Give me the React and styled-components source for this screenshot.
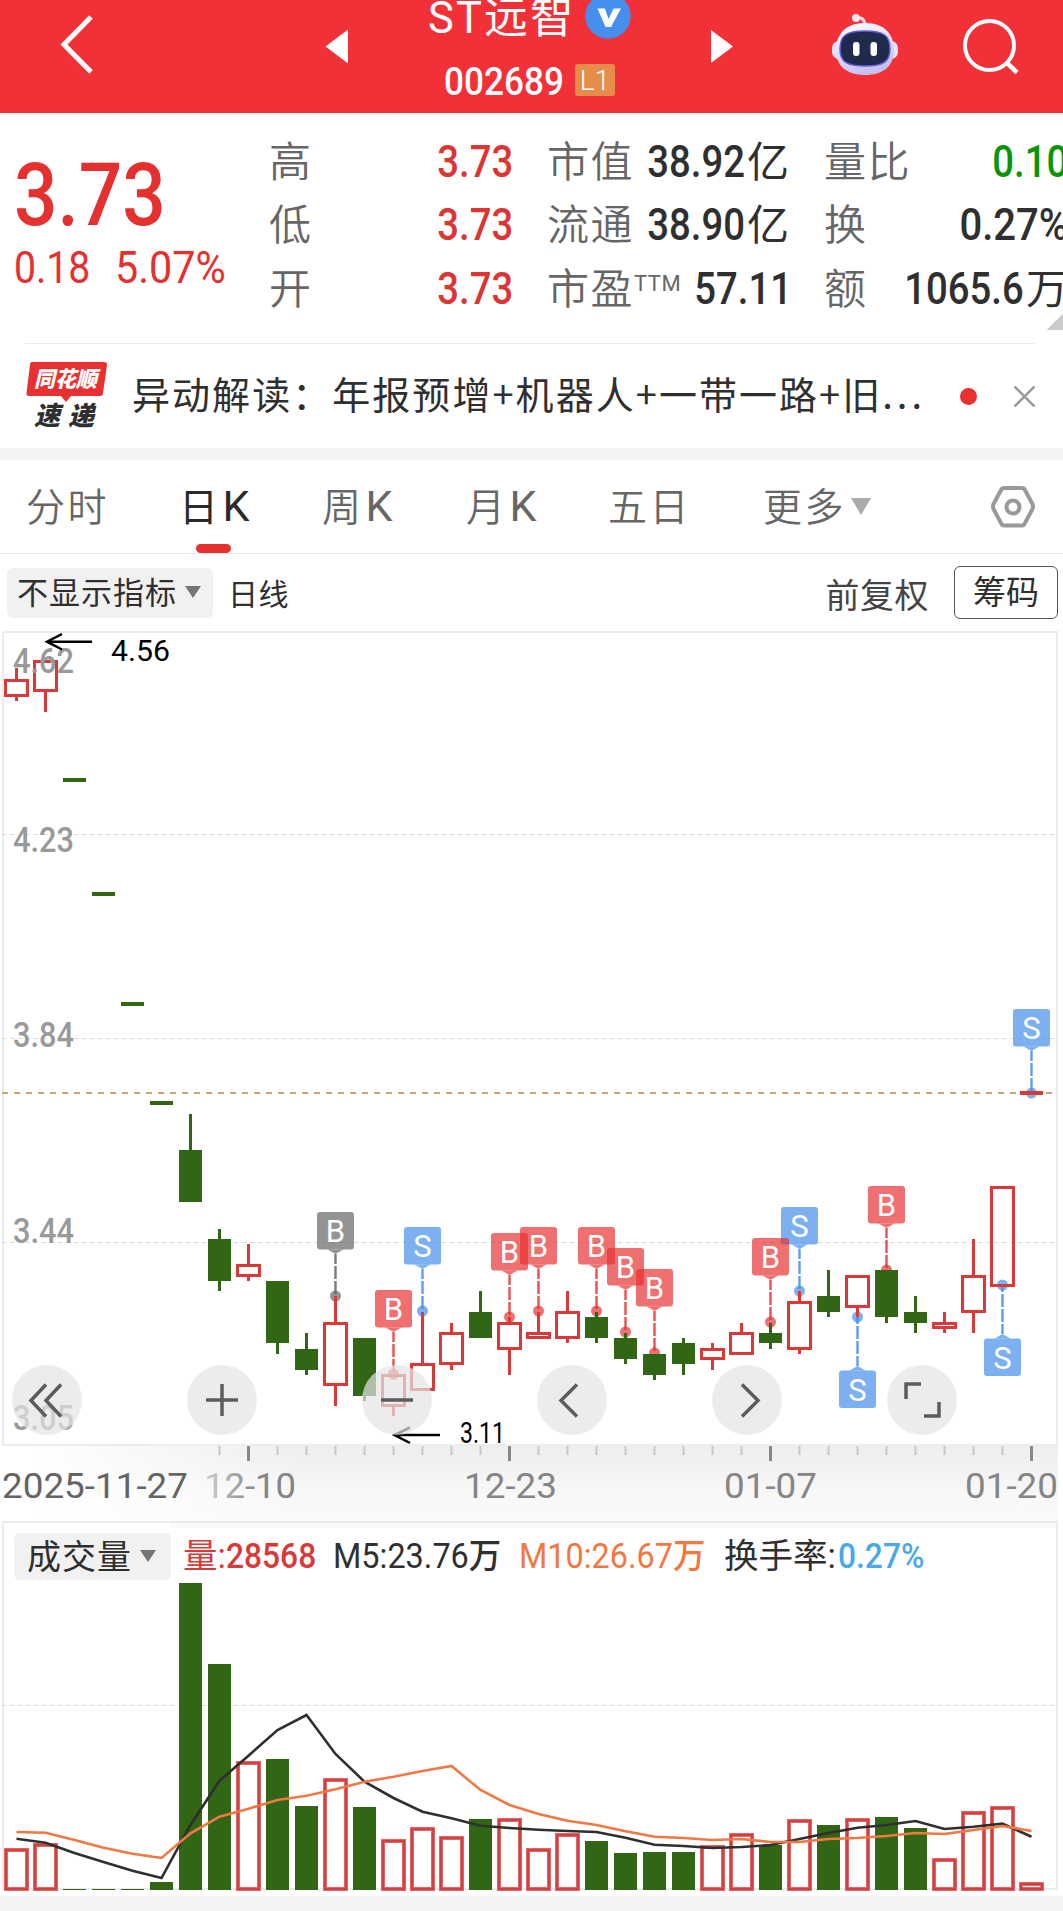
import React from 'react';
import styled, { createGlobalStyle } from 'styled-components';

const GlobalStyle = createGlobalStyle`
    * {
        box-sizing: border-box;
    }

    body {
        margin: 0;
        background: #fff;
        font-family: Roboto, 'Noto Sans CJK SC', sans-serif;
        overflow-x: hidden;
    }

    svg {
        display: block;
        flex: none;
    }
`;

const Page = styled.div`
    width: 1063px;
    height: 1911px;
    overflow: hidden;
    color: #2f2f2f;
    white-space: nowrap;
`;

// narrow figures, squeezed towards the side they are aligned to
const Digits = styled.span`
    display: inline-block;
    font-weight: ${({ $weight }) => $weight || 500};
    transform: scaleX(${({ $squeeze }) => $squeeze || 0.88});
    transform-origin: ${({ $from }) => $from || 'left'} center;
`;

/* ---------- header ---------- */

const Header = styled.header`
    display: flex;
    height: 113px;
    background: #f23038;
    color: #fff;
`;

const HeaderIcons = styled.svg`
    width: ${({ $width }) => $width}px;
    height: 113px;
`;

const Stock = styled.div`
    width: 316px;
    padding-left: 60px;
`;

const StockName = styled.div`
    display: flex;
    height: 39px;
    font-size: 43.5px;
    letter-spacing: 2.2px;
    line-height: 37px;
`;

const NameText = styled.div`
    width: 157px;
`;

const StockCode = styled.div`
    display: flex;
    align-items: center;
    height: 54px;
    margin-top: 14px;
    padding-left: 16px;
    font-size: 38px;
`;

const CodeText = styled.div`
    width: 131px;
    padding-top: 4px;
`;

const Level = styled.div`
    width: 40px;
    height: 32px;
    border-radius: 3px;
    background: #e58e4b;
    font-size: 28px;
    font-weight: 300;
    line-height: 33px;
    text-align: center;
`;

/* ---------- quote ---------- */

const Quote = styled.section`
    position: relative;
    display: flex;
    height: 230px;
    padding-top: 18px;
`;

const Main = styled.div`
    width: 275px;
    padding-left: 14px;
    color: #e4302f;
    flex: none;
`;

const Price = styled.div`
    height: 102px;
    padding-top: 13px;
    font-size: 87px;
    line-height: 102px;
`;

const Change = styled.div`
    display: flex;
    margin-top: 11px;
    font-size: 43.5px;
    line-height: 50px;
`;

const ChangeItem = styled.div`
    width: 101px;
`;

const Column = styled.div`
    width: ${({ $width }) => $width}px;
    margin-right: ${({ $gap }) => $gap || 0}px;
    flex: none;
`;

const Field = styled.div`
    display: flex;
    justify-content: space-between;
    height: 63.4px;
    font-size: 43.5px;
    line-height: 63px;
    color: ${({ $color }) => $color || '#2f2f2f'};
`;

const FieldLabel = styled.span`
    margin-left: -6px;
    font-size: 42px;
    letter-spacing: 1.5px;
    font-weight: 350;
    color: #666;
`;

const Sup = styled.sup`
    font-size: 22px;
    font-weight: 400;
    line-height: 0;
    vertical-align: 13px;
    letter-spacing: 0.5px;
`;

const Unit = styled.span`
    margin-left: 2px;
    font-size: 42px;
    font-weight: 400;
`;

const Corner = styled.div`
    position: absolute;
    right: 0;
    bottom: 13px;
    width: 17px;
    height: 17px;
    background: linear-gradient(135deg, transparent 50%, #ccc 50%);
`;

/* ---------- news ---------- */

const News = styled.section`
    display: flex;
    align-items: center;
    height: 105px;
    margin: 0 28px 0 25px;
    border-top: 1px solid #ececec;
`;

const Headline = styled.div`
    width: 825px;
    margin-left: 24px;
    padding-bottom: 7px;
    font-size: 38px;
    letter-spacing: 2.05px;
    font-family: 'Noto Sans CJK SC', sans-serif;
`;

const Ellipsis = styled.span`
    letter-spacing: 4px;
`;

const RedDot = styled.div`
    width: 17px;
    height: 17px;
    margin: 0 37px 0 3px;
    border-radius: 50%;
    background: #e83030;
`;

const Band = styled.div`
    height: ${({ $height }) => $height}px;
    background: #f4f4f4;
`;

/* ---------- tabs ---------- */

const Tabs = styled.nav`
    display: flex;
    height: 94px;
    padding-left: 26px;
    border-bottom: 1px solid #e6e6e6;
`;

const Tab = styled.div`
    position: relative;
    display: flex;
    align-items: center;
    width: ${({ $width }) => $width}px;
    padding-bottom: 6px;
    font-size: 39px;
    letter-spacing: 2.5px;
    font-weight: ${({ $active }) => ($active ? 400 : 350)};
    color: ${({ $active }) => ($active ? '#2a2a2a' : '#666')};

    &::after {
        content: '';
        display: ${({ $active }) => ($active ? 'block' : 'none')};
        position: absolute;
        left: 17px;
        bottom: 0;
        width: 35px;
        height: 9px;
        border-radius: 5px;
        background: #e83030;
    }
`;

const Latin = styled.span`
    margin: 5px 0 0 2px;
    font-size: 43px;
    font-weight: 400;
`;

const Caret = styled.i`
    width: 0;
    height: 0;
    margin-left: ${({ $gap }) => $gap}px;
    margin-top: ${({ $down }) => $down || 0}px;
    border: ${({ $half }) => $half}px solid transparent;
    border-bottom: 0;
    border-top: ${({ $drop }) => $drop}px solid ${({ $color }) => $color || '#757575'};
`;

const Toolbar = styled.div`
    display: flex;
    align-items: center;
    height: 77px;
    padding: 0 5px 0 7px;
`;

const Chip = styled.div`
    display: flex;
    align-items: center;
    flex: none;
    width: ${({ $width }) => $width}px;
    height: ${({ $height }) => $height}px;
    padding-left: ${({ $pad }) => $pad}px;
    padding-bottom: 4px;
    border-radius: 6px;
    background: #f1f1f1;
    font-size: ${({ $size }) => $size}px;
    letter-spacing: 1px;
`;

const Period = styled.div`
    margin-left: 15px;
    padding-bottom: 2px;
    font-size: 30px;
    letter-spacing: 0.5px;
`;

const Adjust = styled.div`
    margin: 2px 25px 0 auto;
    font-size: 34px;
    letter-spacing: 0.5px;
    color: #444;
`;

const ChipsButton = styled.div`
    width: 104px;
    height: 53px;
    border: 1px solid #555;
    border-radius: 6px;
    font-size: 33px;
    line-height: 52px;
    text-align: center;
`;

/* ---------- charts ---------- */

const PriceChart = styled.div`
    position: relative;
    height: 890px;
`;

const Controls = styled.div`
    position: absolute;
    left: 12px;
    top: 734px;
    display: flex;
    gap: 105px;
`;

const RoundButton = styled.div`
    width: 70px;
    height: 70px;
    border-radius: 50%;
    background: rgba(228, 228, 228, 0.71);
`;

const VolumePanel = styled.section`
    position: relative;
    height: 375px;
`;

const VolumeChart = styled.svg`
    position: absolute;
    left: 0;
    top: 0;
`;

const Legend = styled.div`
    position: relative;
    display: flex;
    align-items: center;
    height: 71px;
    padding: 0 0 0 14px;
    font-size: 34.5px;
`;

const LegendItem = styled.div`
    flex: none;
    width: ${({ $width }) => $width}px;
    padding-bottom: 1px;
    color: ${({ $color }) => $color || '#2f2f2f'};
    line-height: 50px;
`;

const Volume = styled(LegendItem)`
    margin-left: 12px;
`;

const RED = '#d93a39';
const GREEN = '#306614';

const xOf = (i) => 16.5 + i * 29;

// [up, high, top, bottom, low]
const candles = [
    [1, 668, 679, 697, 701],
    [1, 660, 660, 692, 712],
    [0, 778, 778, 782, 782],
    [0, 892, 892, 896, 896],
    [0, 1002, 1002, 1006, 1006],
    [0, 1101, 1101, 1105, 1105],
    [0, 1114, 1150, 1202, 1202],
    [0, 1229, 1239, 1281, 1291],
    [1, 1244, 1264, 1277, 1281],
    [0, 1281, 1281, 1343, 1354],
    [0, 1333, 1349, 1370, 1375],
    [1, 1296, 1322, 1386, 1406],
    [0, 1338, 1338, 1396, 1401],
    [1, 1374, 1374, 1407, 1416],
    [1, 1312, 1363, 1391, 1391],
    [1, 1323, 1332, 1365, 1370],
    [0, 1291, 1312, 1338, 1338],
    [1, 1317, 1322, 1350, 1375],
    [1, 1312, 1332, 1339, 1339],
    [1, 1291, 1311, 1339, 1343],
    [0, 1312, 1317, 1338, 1343],
    [0, 1333, 1338, 1359, 1364],
    [0, 1354, 1354, 1375, 1380],
    [0, 1338, 1343, 1364, 1375],
    [1, 1343, 1348, 1360, 1370],
    [1, 1323, 1332, 1355, 1355],
    [0, 1323, 1333, 1343, 1349],
    [1, 1291, 1301, 1350, 1354],
    [0, 1270, 1296, 1312, 1317],
    [1, 1275, 1275, 1308, 1317],
    [0, 1270, 1270, 1317, 1323],
    [0, 1296, 1312, 1323, 1333],
    [1, 1312, 1322, 1329, 1333],
    [1, 1239, 1275, 1313, 1333],
    [1, 1186, 1186, 1287, 1287],
    [1, 1091, 1091, 1095, 1095],
];

// [index, letter, colour, tag top, dot y]
const marks = [
    [11, 'B', '#646464', 1212, 1296],
    [13, 'B', '#e83030', 1290, 1374],
    [14, 'S', '#428cea', 1227, 1311],
    [17, 'B', '#e83030', 1233, 1317],
    [18, 'B', '#e83030', 1227, 1311],
    [20, 'B', '#e83030', 1227, 1311],
    [21, 'B', '#e83030', 1248, 1332],
    [22, 'B', '#e83030', 1269, 1353],
    [27, 'S', '#428cea', 1207, 1291],
    [26, 'B', '#e83030', 1238, 1322],
    [29, 'S', '#428cea', 1370.5, 1317],
    [30, 'B', '#e83030', 1186, 1270],
    [34, 'S', '#428cea', 1338.5, 1285],
    [35, 'S', '#428cea', 1009, 1093],
];

const volumes = [
    1848, 1843, 1889, 1889, 1889, 1882, 1583, 1664, 1761, 1759, 1806, 1778,
    1807, 1839, 1827, 1836, 1819, 1818, 1848, 1833, 1841, 1853, 1852, 1852,
    1845, 1833, 1845, 1819, 1825, 1818, 1817, 1828, 1858, 1811, 1806, 1882,
];

const ma5 = [
    1838.7, 1842.7, 1853, 1862, 1870.7, 1878, 1825, 1780.7, 1755.7, 1730, 1715, 1754,
    1781.7, 1798, 1811.7, 1818.3, 1825.7, 1828, 1829.7, 1831, 1832, 1837.7, 1844.7, 1846,
    1848, 1847, 1845, 1839, 1833, 1827.7, 1825, 1821, 1829, 1826.7, 1823.7, 1836.7,
];

const ma10 = [
    1832, 1832.7, 1840, 1847.7, 1853.7, 1858, 1833.3, 1816.7, 1808.7, 1800, 1795.7, 1789.3,
    1781.7, 1776.7, 1771, 1766, 1790, 1805, 1814, 1820.7, 1825, 1831.3, 1836.7, 1838,
    1840, 1839, 1842, 1842, 1839, 1838, 1836, 1833, 1834, 1830, 1826, 1831,
];

const toPoints = (values) => values.map((y, i) => `${xOf(i)},${y}`).join(' ');

const Bar = ({ x, up, top, bottom }) =>
    up && bottom - top > 5 ? (
        <rect x={x - 11} y={top + 1.5} width="22" height={bottom - top - 3} fill="none" stroke={RED} strokeWidth="3" />
    ) : (
        <rect x={x - 11.5} y={top} width="23" height={bottom - top} fill={up ? RED : GREEN} />
    );

const VolumeBar = ({ x, up, top }) => {
    if (!up) {
        return <rect x={x - 11.5} y={top} width="23" height={1890 - top} fill={GREEN} />;
    }
    const box = { x: x - 10.5, y: top + 2, width: 21, height: 1887 - top };
    return (
        <g>
            <rect {...box} fill="#fff" stroke="#e36666" strokeWidth="4" />
            <rect {...box} fill="none" stroke="#d03636" strokeWidth="1.6" />
        </g>
    );
};

const Candle = ({ index, data }) => {
    const [up, high, top, bottom, low] = data;
    const x = xOf(index);
    return (
        <g>
            {high < top && <path d={`M${x} ${high}V${top + 1}`} stroke={up ? RED : GREEN} strokeWidth="3" />}
            {low > bottom && <path d={`M${x} ${bottom - 1}V${low}`} stroke={up ? RED : GREEN} strokeWidth="3" />}
            <Bar x={x} up={up} top={top} bottom={bottom} />
        </g>
    );
};

const Mark = ({ data }) => {
    const [index, letter, color, top, dot] = data;
    const x = xOf(index);
    const below = top > dot;
    const edge = below ? top : top + 37.5;
    const tip = below ? edge - 4.5 : edge + 4.5;
    return (
        <g>
            <line x1={x} x2={x} y1={tip} y2={dot} stroke={color} strokeOpacity="0.85" strokeWidth="2.4" strokeDasharray="13 2" strokeDashoffset="3" />
            <g fill={color} fillOpacity="0.69">
                <circle cx={x} cy={dot} r="5.5" />
                <rect x={x - 18.5} y={top} width="37" height="37.5" rx="3" />
                <path d={`M${x - 8} ${edge}L${x} ${tip}L${x + 8} ${edge}Z`} />
            </g>
            <text x={x} y={top + 30} fontSize="31" fill="#fff" textAnchor="middle">{letter}</text>
        </g>
    );
};

const priceLabels = [['4.62', 672.5], ['4.23', 851.5], ['3.84', 1046.5], ['3.44', 1242.5], ['3.05', 1429.5]];
const dates = [['12-10', 204, 92], ['12-23', 464, 93], ['01-07', 724, 93], ['01-20', 965, 93]];
const controlIcons = [
    'M34 19.5L19 35.5L34 51.5M49 19.5L34 35.5L49 51.5',
    'M19 35H51M35 19V51',
    'M19 35H51',
    'M40 19.5L24 35.5L40 51.5',
    'M30 19.5L46 35.5L30 51.5',
    'M19 34V19H34M37 51H52V37',
];

const Robot = () => (
    <g>
        <path d="M865 26C865 19 861 17 857 18" fill="none" stroke="#f4dfe8" strokeWidth="3" />
        <circle cx="856" cy="18" r="4" fill="#fbe6ea" />
        <rect x="832" y="41" width="66" height="18" rx="7" fill="#e4e2f6" />
        <path d="M865 23C884 23 894 34 894 50C894 67 882 75 865 75C848 75 836 67 836 50C836 34 846 23 865 23Z" fill="url(#robotHead)" />
        <path d="M865 31C883 31 890 35 890 49C890 62 883 66 865 66C847 66 840 62 840 49C840 35 847 31 865 31Z" fill="#1f2a4c" stroke="#6a5bd8" strokeWidth="1.5" />
        <rect x="853" y="42" width="6.5" height="14" rx="3" fill="#fff" />
        <rect x="870.5" y="42" width="6.5" height="14" rx="3" fill="#fff" />
        <defs>
            <linearGradient id="robotHead" x1="0" y1="0" x2="0.4" y2="1">
                <stop offset="0.2" stopColor="#f6f4fd" />
                <stop offset="1" stopColor="#c6c1f0" />
            </linearGradient>
        </defs>
    </g>
);

export default function App() {
    return (
        <Page>
            <GlobalStyle />
            <Header>
                <HeaderIcons $width={368} viewBox="0 0 368 113">
                    <path d="M91 17L64 44.5L91 72" fill="none" stroke="#fff" strokeWidth="5" />
                    <path d="M325.5 46.5L348 29.5V63.5Z" fill="#fff" />
                </HeaderIcons>
                <Stock>
                    <StockName>
                        <NameText>ST远智</NameText>
                        <svg width="46" height="39" viewBox="0 0 46 39">
                            <circle cx="23" cy="16" r="22.7" fill="#468fee" />
                            <path d="M12.5 8.5H20L23.5 19L28.5 8.5H36L26 27H20.5Z" fill="#fff" />
                        </svg>
                    </StockName>
                    <StockCode>
                        <CodeText><Digits $squeeze={0.925}>002689</Digits></CodeText>
                        <Level>L1</Level>
                    </StockCode>
                </Stock>
                <HeaderIcons $width={379} viewBox="684 0 379 113">
                    <path d="M733 46.5L711 30V63Z" fill="#fff" />
                    <Robot />
                    <circle cx="989.5" cy="45.5" r="24.5" fill="none" stroke="#fff" strokeWidth="4" />
                    <path d="M1006 62L1017 72.5" stroke="#fff" strokeWidth="4.5" />
                </HeaderIcons>
            </Header>

            <Quote>
                <Main>
                    <Price><Digits>3.73</Digits></Price>
                    <Change>
                        <ChangeItem><Digits $weight={450} $squeeze={0.9}>0.18</Digits></ChangeItem>
                        <ChangeItem><Digits $weight={450} $squeeze={0.95}>5.07%</Digits></ChangeItem>
                    </Change>
                </Main>
                <Column $width={238} $gap={40}>
                    {['高', '低', '开'].map((label) => (
                        <Field key={label} $color="#dd3434">
                            <FieldLabel>{label}</FieldLabel>
                            <Digits $from="right">3.73</Digits>
                        </Field>
                    ))}
                </Column>
                <Column $width={236} $gap={41}>
                    <Field>
                        <FieldLabel>市值</FieldLabel>
                        <span><Digits $from="right">38.92</Digits><Unit>亿</Unit></span>
                    </Field>
                    <Field>
                        <FieldLabel>流通</FieldLabel>
                        <span><Digits $from="right">38.90</Digits><Unit>亿</Unit></span>
                    </Field>
                    <Field>
                        <FieldLabel>市盈<Sup>TTM</Sup></FieldLabel>
                        <Digits $from="right">57.11</Digits>
                    </Field>
                </Column>
                <Column $width={238}>
                    <Field $color="#089608">
                        <FieldLabel>量比</FieldLabel>
                        <Digits $from="right">0.10</Digits>
                    </Field>
                    <Field>
                        <FieldLabel>换</FieldLabel>
                        <Digits $from="right" $squeeze={0.92}>0.27%</Digits>
                    </Field>
                    <Field>
                        <FieldLabel>额</FieldLabel>
                        <span><Digits $from="right">1065.6</Digits><Unit>万</Unit></span>
                    </Field>
                </Column>
                <Corner />
            </Quote>

            <News>
                <svg width="83" height="70" viewBox="25 361 83 70">
                    <path d="M32 362H104Q107 362 107 365L103 393Q103 396 100 396H71L66 402L61 396H29Q26 396 26.5 393L30 365Q30 362 32 362Z" fill="#e83030" />
                    <text x="34" y="387" fontSize="22" fontWeight="900" fill="#fff" fontStyle="italic" textLength="63" lengthAdjust="spacingAndGlyphs">同花顺</text>
                    <text x="34" y="425" fontSize="26" fontWeight="900" fill="#2f2f2f" fontStyle="italic" textLength="60">速递</text>
                </svg>
                <Headline>异动解读：年报预增+机器人+一带一路+旧<Ellipsis>...</Ellipsis></Headline>
                <RedDot />
                <svg width="21" height="21" viewBox="0 0 21 21">
                    <path d="M0.5 0.5L20.5 20.5M20.5 0.5L0.5 20.5" stroke="#999" strokeWidth="2.5" />
                </svg>
            </News>
            <Band $height={12} />

            <Tabs>
                <Tab $width={153}>分时</Tab>
                <Tab $width={143} $active>日<Latin>K</Latin></Tab>
                <Tab $width={144}>周<Latin>K</Latin></Tab>
                <Tab $width={142}>月<Latin>K</Latin></Tab>
                <Tab $width={155}>五日</Tab>
                <Tab $width={228}>更多<Caret $gap={5} $down={5} $half={10} $drop={17} $color="#aaa" /></Tab>
                <svg width="44" height="93" viewBox="991 460 44 93">
                    <path d="M1004 488H1022Q1024 488 1025 490L1032.5 504Q1033.5 506.5 1032.5 509L1025 523Q1024 525.5 1022 525.5H1004Q1002 525.5 1001 523L993.5 509Q992.5 506.5 993.5 504L1001 490Q1002 488 1004 488Z" fill="none" stroke="#999" strokeWidth="4" />
                    <circle cx="1013" cy="507" r="6.5" fill="none" stroke="#999" strokeWidth="4" />
                </svg>
            </Tabs>

            <Toolbar>
                <Chip $width={206} $height={50} $pad={10} $size={31}>
                    不显示指标
                    <Caret $gap={8} $down={3} $half={8} $drop={12} />
                </Chip>
                <Period>日线</Period>
                <Adjust>前复权</Adjust>
                <ChipsButton>筹码</ChipsButton>
            </Toolbar>

            <PriceChart>
                <svg width="1063" height="890" viewBox="0 631 1063 890">
                    <defs>
                        <linearGradient id="axisShade" x1="0" y1="0" x2="0" y2="1">
                            <stop offset="0" stopColor="#eeeeee" />
                            <stop offset="0.65" stopColor="#f8f8f8" />
                            <stop offset="1" stopColor="#fafafa" />
                        </linearGradient>
                        <linearGradient id="axisFade" x1="0" y1="0" x2="1" y2="0">
                            <stop offset="0.1" stopColor="#fff" />
                            <stop offset="1" stopColor="#fff" stopOpacity="0" />
                        </linearGradient>
                        <linearGradient id="dateFade" gradientUnits="userSpaceOnUse" x1="200" y1="0" x2="256" y2="0">
                            <stop offset="0" stopColor="#d8d8d8" />
                            <stop offset="1" stopColor="#858585" />
                        </linearGradient>
                    </defs>
                    <rect x="0" y="1446" width="1058" height="75" fill="url(#axisShade)" />
                    <rect x="0" y="1446" width="300" height="75" fill="url(#axisFade)" />
                    <rect x="3" y="632" width="1054" height="813" fill="none" stroke="#ececec" strokeWidth="2" />
                    <path d="M2 834.5H1056M2 1038.5H1056M2 1242.5H1056" stroke="#dcdcdc" strokeDasharray="4.5 3.5" />
                    <path d="M2 1093H1056" stroke="#c9a571" strokeWidth="2" strokeDasharray="6 6" />

                    {marks.map((mark) => <Mark key={mark[0]} data={mark} />)}
                    {candles.map((candle, i) => <Candle key={i} index={i} data={candle} />)}

                    {priceLabels.map(([label, y]) => (
                        <text key={label} x="13" y={y} fontSize="34.5" fontWeight="500" fill="#999" textLength="61" lengthAdjust="spacingAndGlyphs">{label}</text>
                    ))}

                    <path d="M92 641.7H47M62 634L47 641.7L62 649.5" fill="none" stroke="#000" strokeWidth="2.5" />
                    <text x="111" y="661" fontSize="29.5" fill="#000" textLength="59" lengthAdjust="spacingAndGlyphs">4.56</text>
                    <path d="M440 1435H394.5M410 1427.5L394.5 1435L410 1443" fill="none" stroke="#000" strokeWidth="2.5" />
                    <text x="460" y="1442.5" fontSize="29.5" fill="#000" textLength="45" lengthAdjust="spacingAndGlyphs">3.11</text>

                    {candles.slice(7).map((_, n) => {
                        const i = n + 7;
                        const major = (i - 8) % 9 === 0;
                        return (
                            <line
                                key={i}
                                x1={xOf(i)}
                                x2={xOf(i)}
                                y1="1446"
                                y2={major ? 1461 : 1455}
                                stroke={major ? '#888' : '#c6c6c6'}
                                strokeWidth={major ? 3 : 2}
                            />
                        );
                    })}
                    <text x="2" y="1498" fontSize="34.5" fontWeight="450" fill="#646464" textLength="186" lengthAdjust="spacingAndGlyphs">2025-11-27</text>
                    {dates.map(([label, x, width], i) => (
                        <text key={label} x={x} y="1498" fontSize="34.5" fontWeight="450" fill={i ? '#858585' : 'url(#dateFade)'} textLength={width} lengthAdjust="spacingAndGlyphs">{label}</text>
                    ))}
                </svg>
                <Controls>
                    {controlIcons.map((d) => (
                        <RoundButton key={d}>
                            <svg width="70" height="70" viewBox="0 0 70 70">
                                <path d={d} fill="none" stroke="#5c5c5c" strokeWidth="3.5" />
                            </svg>
                        </RoundButton>
                    ))}
                </Controls>
            </PriceChart>

            <VolumePanel>
                <VolumeChart width="1063" height="375" viewBox="0 1521 1063 375">
                    <rect x="170" y="1521" width="888" height="7" fill="#fafafa" />
                    <rect x="3" y="1522" width="1054" height="367" fill="none" stroke="#ececec" strokeWidth="2" />
                    <path d="M2 1705.5H1056" stroke="#dcdcdc" strokeDasharray="4.5 3.5" />
                    {volumes.map((top, i) => (
                        <VolumeBar key={i} x={xOf(i)} up={candles[i][0]} top={top} />
                    ))}
                    <polyline points={toPoints(ma5)} fill="none" stroke="#2f2f2f" strokeWidth="2.6" />
                    <polyline points={toPoints(ma10)} fill="none" stroke="#f27842" strokeWidth="2.6" />
                </VolumeChart>
                <Legend>
                    <Chip $width={157} $height={47} $pad={13} $size={34}>
                        成交量
                        <Caret $gap={8} $down={3} $half={8} $drop={12} />
                    </Chip>
                    <Volume $width={150} $color={RED}>量:<Digits $squeeze={0.92}>28568</Digits></Volume>
                    <LegendItem $width={186}><Digits $weight={450} $squeeze={0.94}>M5:23.76万</Digits></LegendItem>
                    <LegendItem $width={205} $color="#f27842"><Digits $weight={450} $squeeze={0.94}>M10:26.67万</Digits></LegendItem>
                    <LegendItem $width={114}>换手率:</LegendItem>
                    <LegendItem $color="#49a8e8"><Digits $squeeze={0.92}>0.27%</Digits></LegendItem>
                </Legend>
            </VolumePanel>
            <Band $height={15} />
        </Page>
    );
}
